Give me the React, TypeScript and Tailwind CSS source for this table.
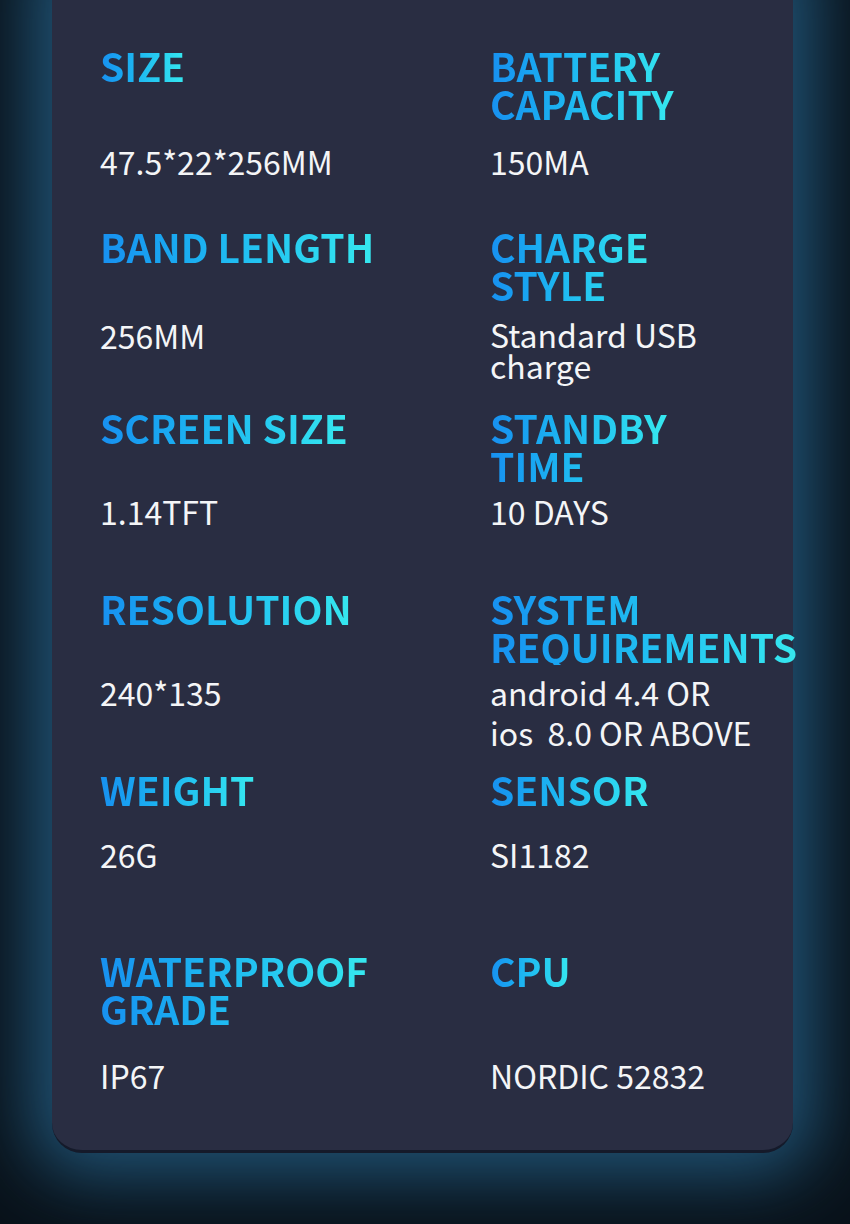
const specs = [
  {
    head: "h-[95px]",
    left: { title: ["SIZE"], value: ["47.5*22*256MM"] },
    right: { title: ["BATTERY", "CAPACITY"], value: ["150MA"] },
  },
  {
    head: "h-[88px]",
    left: { title: ["BAND LENGTH"], value: ["256MM"] },
    right: { title: ["CHARGE", "STYLE"], value: ["Standard USB", "charge"], tight: true },
  },
  {
    head: "h-[83px]",
    left: { title: ["SCREEN SIZE"], value: ["1.14TFT"] },
    right: { title: ["STANDBY", "TIME"], value: ["10 DAYS"] },
  },
  {
    head: "h-[83px]",
    left: { title: ["RESOLUTION"], value: ["240*135"] },
    right: { title: ["SYSTEM", "REQUIREMENTS"], value: ["android 4.4 OR", "ios  8.0 OR ABOVE"] },
  },
  {
    head: "h-[64px]",
    left: { title: ["WEIGHT"], value: ["26G"] },
    right: { title: ["SENSOR"], value: ["SI1182"] },
  },
  {
    head: "h-[104px]",
    left: { title: ["WATERPROOF", "GRADE"], value: ["IP67"] },
    right: { title: ["CPU"], value: ["NORDIC 52832"] },
  },
];

type Cell = { title: string[]; value: string[]; tight?: boolean };

function SpecCell({ cell, head }: { cell: Cell; head: string }) {
  return (
    <div className="flex flex-col">
      <div className={head}>
        <h3 className="inline-block bg-gradient-to-r from-[#1890f0] to-[#36e8ef] bg-clip-text text-[39px] font-bold leading-[38px] whitespace-nowrap text-transparent">
          {cell.title.map((t) => (
            <span key={t} className="block">
              {t}
            </span>
          ))}
        </h3>
      </div>
      <div
        className={`text-[32px] whitespace-pre text-[#f4f5f7] ${cell.tight ? "pt-1 leading-[31px]" : "leading-[40px]"}`}
      >
        {cell.value.map((v) => (
          <div key={v}>{v}</div>
        ))}
      </div>
    </div>
  );
}

export default function App() {
  return (
    <div className="h-[1224px] w-[850px] overflow-hidden bg-[#09121a] font-['Noto_Sans_CJK_SC','Noto_Sans',sans-serif]">
      <div className="-mt-10 ml-[52px] w-[741px] rounded-b-[30px] border-b-[3px] border-[#151a2a] bg-[#292d42] pt-[86px] pb-[55px] pl-[48px] shadow-[0_0_70px_22px_rgba(36,92,130,0.9)]">
        {specs.map((row, i) => (
          <div
            key={i}
            className={`grid grid-cols-[390px_1fr] ${i < specs.length - 1 ? "h-[181px]" : ""}`}
          >
            <SpecCell cell={row.left} head={row.head} />
            <SpecCell cell={row.right} head={row.head} />
          </div>
        ))}
      </div>
    </div>
  );
}
